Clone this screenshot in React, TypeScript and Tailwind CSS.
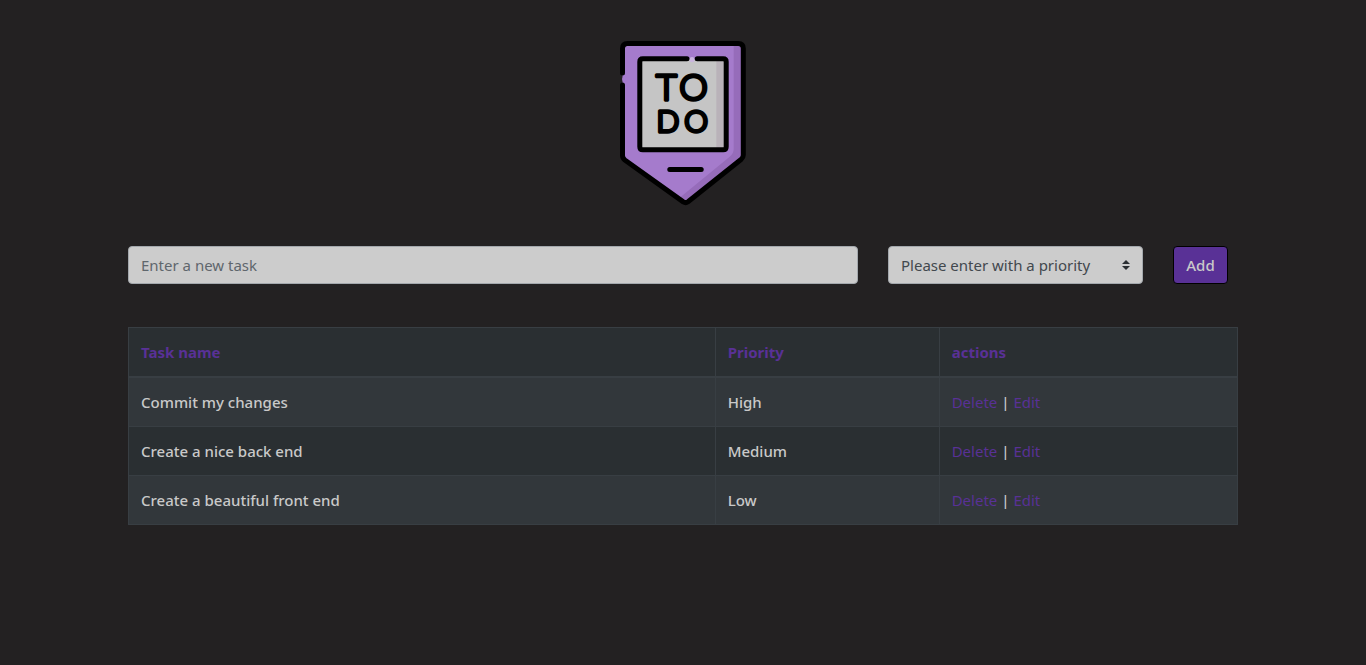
import { useState, type FormEvent } from "react";

type Task = { id: number; name: string; priority: string };

const initialTasks: Task[] = [
  { id: 1, name: "Commit my changes", priority: "High" },
  { id: 2, name: "Create a nice back end", priority: "Medium" },
  { id: 3, name: "Create a beautiful front end", priority: "Low" },
];

function Logo() {
  return (
    <svg viewBox="0 0 126 165" className="h-[165px] w-[126px]" role="img" aria-label="To do">
      <path d="M6 2.5H120Q123.3 2.5 123.3 6V115L65.7 161.7L2.5 115V6Q2.5 2.5 6 2.5Z" fill="#a57bcc" />
      <path d="M113.7 2.5H123.3V115L65.7 162L60 156.5L110 115.5Q113.7 112 113.7 108Z" fill="#966cba" />
      <circle cx="4.8" cy="38" r="2.6" fill="#a57bcc" />
      <rect x="20" y="18" width="86" height="91" fill="#c5c5c5" />
      <rect x="96.3" y="18" width="10" height="91" fill="#b9b2b9" />
      <circle cx="72" cy="18.6" r="2.6" fill="#c9b4dd" />
      <g fill="none" stroke="#000" strokeWidth="5" strokeLinecap="round" strokeLinejoin="round">
        <path d="M2.5 32V7.5Q2.5 2.5 7.5 2.5H118.3Q123.3 2.5 123.3 7.5V114Q123.3 116.5 121.3 118.2L68 160.8Q65.7 162.4 63.3 160.9L4.8 119Q2.5 117.2 2.5 114.5V44" />
        <path d="M67 17.8H22.8Q19.8 17.8 19.8 20.8V105.8Q19.8 108.8 22.8 108.8H103.2Q106.2 108.8 106.2 105.8V20.8Q106.2 17.8 103.2 17.8H77.2" />
        <path d="M49.8 128.5H81.2" />
      </g>
      <g
        className="font-['Lato',sans-serif] font-light"
        fill="#000"
        stroke="#000"
        strokeWidth="3.4"
        strokeLinejoin="round"
        textAnchor="middle"
      >
        <text x="46.5" y="58.8" fontSize="36">T</text>
        <text x="73.6" y="58.8" fontSize="36">O</text>
        <text x="47.8" y="91" fontSize="30">D</text>
        <text x="76.2" y="91" fontSize="30">O</text>
      </g>
    </svg>
  );
}

export default function App() {
  const [tasks, setTasks] = useState(initialTasks);
  const [name, setName] = useState("");
  const [priority, setPriority] = useState("");

  const addTask = (event: FormEvent) => {
    event.preventDefault();
    if (!name || !priority) return;
    setTasks([...tasks, { id: Date.now(), name, priority }]);
    setName("");
    setPriority("");
  };

  const removeTask = (id: number) => setTasks(tasks.filter((task) => task.id !== id));

  const editTask = (task: Task) => {
    setName(task.name);
    setPriority(task.priority);
    removeTask(task.id);
  };

  return (
    <div className="min-h-screen bg-[#232122] px-4 font-['Noto_Sans',sans-serif] text-[15px] leading-6 text-[#c9c9c9]">
      <main className="mx-auto w-full max-w-[1110px] pt-[41px]">
        <header className="flex justify-center">
          <Logo />
        </header>

        <form onSubmit={addTask} className="mt-10 flex items-center gap-[30px]">
          <input
            type="text"
            aria-label="Task name"
            value={name}
            onChange={(event) => setName(event.target.value)}
            placeholder="Enter a new task"
            className="h-[38px] min-w-0 flex-1 rounded border border-[#a3a8ad] bg-[#cccccc] px-3 text-[#495057] placeholder:text-[#5f666d] placeholder:opacity-100"
          />
          <div className="relative w-[255px]">
            <select
              aria-label="Priority"
              value={priority}
              onChange={(event) => setPriority(event.target.value)}
              className="h-[38px] w-full appearance-none rounded border border-[#a3a8ad] bg-[#cccccc] pr-7 pl-3 text-[#42484e]"
            >
              <option value="">Please enter with a priority</option>
              <option>High</option>
              <option>Medium</option>
              <option>Low</option>
            </select>
            <svg
              viewBox="0 0 4 5"
              aria-hidden="true"
              className="pointer-events-none absolute top-[14px] right-[13px] h-[10px] w-2"
            >
              <path fill="#2a2e32" d="M2 0L0 2h4zm0 5L0 3h4z" />
            </svg>
          </div>
          <div className="w-[65px]">
            <button
              type="submit"
              className="block h-[38px] w-[55px] rounded border border-black bg-[#593196] text-center font-medium"
            >
              Add
            </button>
          </div>
        </form>

        <table className="mt-[43px] w-full table-fixed border-collapse bg-[#2a2f32] text-left">
          <colgroup>
            <col className="w-[52.9%]" />
            <col className="w-[20.2%]" />
            <col />
          </colgroup>
          <thead>
            <tr className="text-[#593196]">
              {["Task name", "Priority", "actions"].map((title) => (
                <th key={title} className="border border-b-2 border-[#383e43] p-3 font-bold">
                  {title}
                </th>
              ))}
            </tr>
          </thead>
          <tbody className="font-medium">
            {tasks.map((task) => (
              <tr key={task.id} className="odd:bg-[#32373b]">
                <td className="border border-[#383e43] p-3">{task.name}</td>
                <td className="border border-[#383e43] p-3">{task.priority}</td>
                <td className="border border-[#383e43] p-3">
                  <a
                    href="#delete"
                    onClick={() => removeTask(task.id)}
                    className="font-normal text-[#593196]"
                  >
                    Delete
                  </a>
                  {" | "}
                  <a
                    href="#edit"
                    onClick={() => editTask(task)}
                    className="font-normal text-[#593196]"
                  >
                    Edit
                  </a>
                </td>
              </tr>
            ))}
          </tbody>
        </table>
      </main>
    </div>
  );
}
